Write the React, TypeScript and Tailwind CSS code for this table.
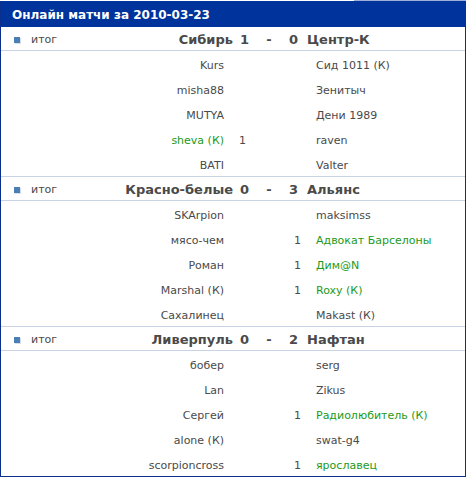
type Player = { name: string; goals?: number; green?: boolean }
type Match = { home: string; away: string; hs: number; as: number; rows: [Player, Player][] }

const matches: Match[] = [
  {
    home: 'Сибирь', away: 'Центр-К', hs: 1, as: 0,
    rows: [
      [{ name: 'Kurs' }, { name: 'Сид 1011 (К)' }],
      [{ name: 'misha88' }, { name: 'Зенитыч' }],
      [{ name: 'MUTYA' }, { name: 'Дени 1989' }],
      [{ name: 'sheva (К)', goals: 1, green: true }, { name: 'raven' }],
      [{ name: 'BATI' }, { name: 'Valter' }],
    ],
  },
  {
    home: 'Красно-белые', away: 'Альянс', hs: 0, as: 3,
    rows: [
      [{ name: 'SKArpion' }, { name: 'maksimss' }],
      [{ name: 'мясо-чем' }, { name: 'Адвокат Барселоны', goals: 1, green: true }],
      [{ name: 'Роман' }, { name: 'Дим@N', goals: 1, green: true }],
      [{ name: 'Marshal (К)' }, { name: 'Roxy (К)', goals: 1, green: true }],
      [{ name: 'Сахалинец' }, { name: 'Makast (К)' }],
    ],
  },
  {
    home: 'Ливерпуль', away: 'Нафтан', hs: 0, as: 2,
    rows: [
      [{ name: 'бобер' }, { name: 'serg' }],
      [{ name: 'Lan' }, { name: 'Zikus' }],
      [{ name: 'Сергей' }, { name: 'Радиолюбитель (К)', goals: 1, green: true }],
      [{ name: 'alone (К)' }, { name: 'swat-g4' }],
      [{ name: 'scorpioncross' }, { name: 'ярославец', goals: 1, green: true }],
    ],
  },
]

function MatchBlock({ m, first }: { m: Match; first: boolean }) {
  return (
    <div className={first ? '' : 'border-t border-[#c9d3e6]'}>
      <div className="flex items-center h-[24px] pt-[3px] border-b border-[#c9d3e6] text-[#4a4a4a]">
        <div className="w-[30px] flex justify-center pl-[1px] pb-[1px]">
          <span className="block w-[6px] h-[6px] bg-[#4a7fb5] shadow-[1px_1px_0_#d6dde8]" />
        </div>
        <div className="text-[11px] w-[80px]">итог</div>
        <div className="w-[122px] text-right font-bold text-[13px] whitespace-nowrap">{m.home}</div>
        <div className="w-[16px] text-right font-bold text-[13px]">{m.hs}</div>
        <div className="w-[40px] text-center font-bold text-[13px]">-</div>
        <div className="w-[8px] text-right font-bold text-[13px]">{m.as}</div>
        <div className="ml-[10px] font-bold text-[13px] whitespace-nowrap">{m.away}</div>
      </div>
      {m.rows.map(([h, a], i) => (
        <div key={i} className="flex items-center h-[25px] pt-[6px] text-[11px] text-[#4a4a4a]">
          <div className={`w-[223px] text-right whitespace-nowrap ${h.green ? 'text-[#1c9a1c]' : ''}`}>{h.name}</div>
          <div className="w-[41px] pl-[15px]">{h.goals ?? ''}</div>
          <div className="w-[36px] text-right">{a.goals ?? ''}</div>
          <div className={`ml-[15px] whitespace-nowrap ${a.green ? 'text-[#1c9a1c]' : ''}`}>{a.name}</div>
        </div>
      ))}
    </div>
  )
}

export default function App() {
  return (
    <div className="w-[467px] h-[479px] bg-white" style={{ fontFamily: 'Verdana, "DejaVu Sans", sans-serif' }}>
      <div className="w-[466px] border-x border-b border-[#0b2f8c]">
        <div className="flex h-[1px] -mx-[1px]">
          <div className="w-[354px] bg-white" />
          <div className="flex-1 bg-[#9fb0d8]" />
        </div>
        <div className="h-[26px] bg-[#00339b] flex items-center pl-[11px] pt-[2px] text-white font-bold text-[12px]">
          Онлайн матчи за 2010-03-23
        </div>
        {matches.map((m, i) => (
          <MatchBlock key={i} m={m} first={i === 0} />
        ))}
      </div>
    </div>
  )
}
